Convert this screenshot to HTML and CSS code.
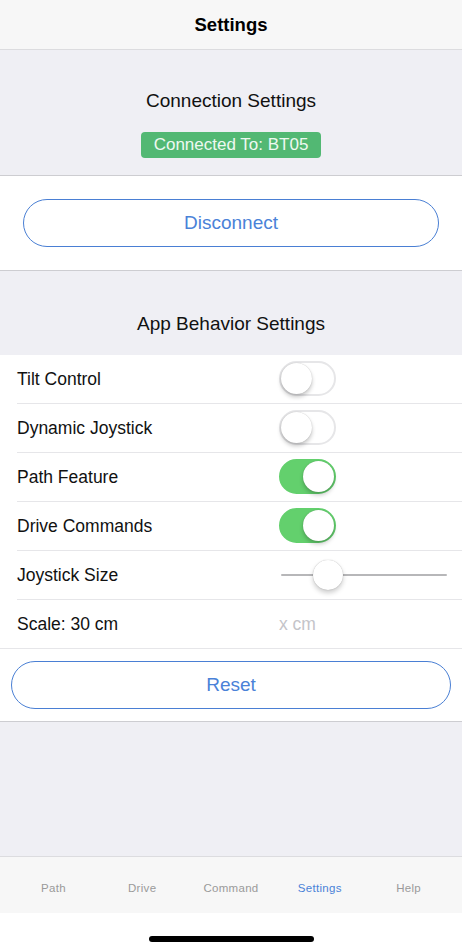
FILE: index.html
```html
<!DOCTYPE html>
<html lang="en">
<head>
<meta charset="utf-8">
<title>Settings</title>
<link rel="stylesheet" href="styles.css">
</head>
<body>
<div class="screen">
  <header class="navbar"><span class="nav-title">Settings</span></header>

  <section class="group-head conn-head">
    <div class="group-title">Connection Settings</div>
    <div class="badge">Connected To: BT05</div>
  </section>

  <section class="card disconnect-card">
    <button class="pill pill-wide">Disconnect</button>
  </section>

  <section class="group-head app-head">
    <div class="group-title">App Behavior Settings</div>
  </section>

  <section class="list">
    <div class="row"><span class="label">Tilt Control</span><span class="switch"><span class="knob"></span></span></div>
    <div class="row"><span class="label">Dynamic Joystick</span><span class="switch"><span class="knob"></span></span></div>
    <div class="row"><span class="label">Path Feature</span><span class="switch on"><span class="knob"></span></span></div>
    <div class="row"><span class="label">Drive Commands</span><span class="switch on"><span class="knob"></span></span></div>
    <div class="row"><span class="label">Joystick Size</span>
      <span class="slider"><span class="track"></span><span class="thumb"></span></span>
    </div>
    <div class="row last"><span class="label">Scale: 30 cm</span><span class="placeholder">x cm</span></div>
    <div class="reset-row"><button class="pill pill-reset">Reset</button></div>
  </section>

  <div class="filler"></div>

  <nav class="tabbar">
    <span class="tab">Path</span>
    <span class="tab">Drive</span>
    <span class="tab">Command</span>
    <span class="tab active">Settings</span>
    <span class="tab">Help</span>
  </nav>
  <div class="home-area"><span class="home-indicator"></span></div>
</div>
</body>
</html>
```

FILE: styles.css
```css
* { box-sizing: border-box; }
html, body { margin: 0; padding: 0; }
body {
  width: 462px;
  height: 951px;
  font-family: "Liberation Sans", Arial, sans-serif;
  color: #111;
  background: #efeff4;
}
.screen {
  height: 951px;
  display: flex;
  flex-direction: column;
}
.navbar {
  height: 50px;
  background: #f7f7f7;
  border-bottom: 1px solid #dcdcdf;
  display: flex;
  align-items: center;
  justify-content: center;
  flex: none;
}
.nav-title {
  font-size: 18.5px;
  font-weight: bold;
  color: #000;
  margin-top: 1px;
}
.group-head {
  background: #efeff4;
  display: flex;
  flex-direction: column;
  align-items: center;
  flex: none;
}
.conn-head {
  height: 126px;
  padding-top: 40px;
  border-bottom: 1px solid #cdcdd1;
}
.group-title {
  font-size: 19px;
  line-height: 22px;
  color: #111;
}
.badge {
  margin-top: 20px;
  height: 26px;
  width: 180px;
  text-align: center;
  background: #52b873;
  color: #eef8f1;
  font-size: 17px;
  line-height: 26px;
  border-radius: 4px;
}
.card {
  background: #fff;
  flex: none;
}
.disconnect-card {
  padding: 23px 23px 23px;
  border-bottom: 1px solid #cdcdd1;
}
.pill {
  display: block;
  width: 100%;
  height: 48px;
  border: 1px solid #4a7fd4;
  border-radius: 24px;
  background: #fff;
  color: #4a82d8;
  font-family: "Liberation Sans", Arial, sans-serif;
  font-size: 19px;
  padding: 0;
}
.app-head {
  height: 84px;
  padding-top: 42px;
}
.list {
  background: #fff;
  flex: none;
  border-bottom: 1px solid #cdcdd1;
}
.row {
  height: 49px;
  margin-left: 17px;
  border-bottom: 1px solid #e6e6e9;
  display: flex;
  align-items: center;
  position: relative;
}
.row.last {
  margin-left: 0;
  padding-left: 17px;
}
.label {
  width: 262px;
  font-size: 17.5px;
  color: #111;
}
.switch {
  width: 57px;
  height: 35px;
  border-radius: 18px;
  border: 2px solid #e6e6e8;
  background: #fff;
  position: relative;
  margin-top: -1px;
}
.switch .knob {
  position: absolute;
  top: 0;
  left: 0;
  width: 31px;
  height: 31px;
  border-radius: 50%;
  background: #fff;
  box-shadow: 0 3px 4px rgba(0,0,0,0.22), 0 0 1px rgba(0,0,0,0.25);
}
.switch.on {
  background: #63d06d;
  border-color: #63d06d;
}
.switch.on .knob {
  left: 22px;
}
.slider {
  position: relative;
  width: 166px;
  height: 32px;
  margin-left: 2px;
}
.slider .track {
  position: absolute;
  left: 0;
  right: 0;
  top: 15px;
  height: 2px;
  background: #b7b7b9;
  border-radius: 1px;
}
.slider .thumb {
  position: absolute;
  left: 32px;
  top: 1px;
  width: 30px;
  height: 30px;
  border-radius: 50%;
  background: #fff;
  box-shadow: 0 3px 5px rgba(0,0,0,0.2), 0 0 1px rgba(0,0,0,0.3);
}
.placeholder {
  font-size: 17.5px;
  color: #c4c4c9;
}
.reset-row {
  padding: 12px 11px 12px;
}
.filler {
  flex: 1;
  background: #efeff4;
}
.tabbar {
  height: 57px;
  flex: none;
  background: #f7f7f7;
  border-top: 1px solid #dcdcdf;
  display: grid;
  grid-template-columns: repeat(5, 1fr);
  align-items: center;
  padding: 6px 9px 0;
}
.tab {
  text-align: center;
  font-size: 11.5px;
  color: #9a9a9a;
  letter-spacing: 0.3px;
}
.tab.active {
  color: #4a82d8;
}
.home-area {
  height: 38px;
  flex: none;
  background: #fff;
  display: flex;
  justify-content: center;
  padding-top: 23px;
}
.home-indicator {
  width: 165px;
  height: 6px;
  border-radius: 3px;
  background: #000;
}
```
